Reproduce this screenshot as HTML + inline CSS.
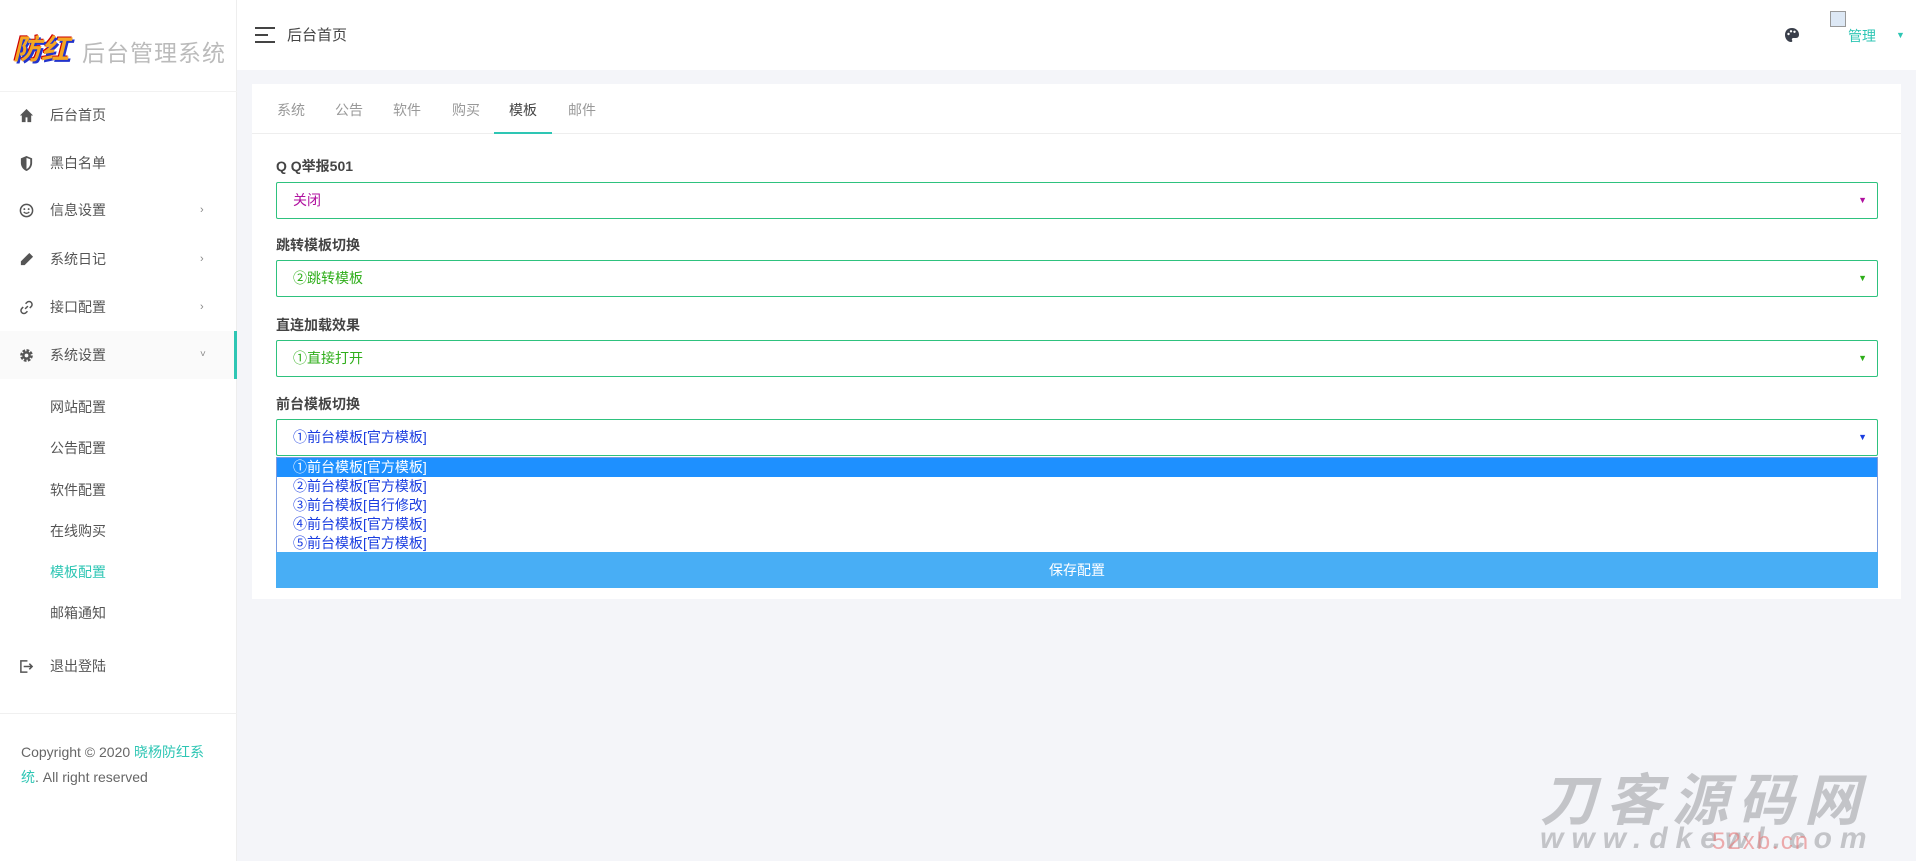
<!DOCTYPE html>
<html><head><meta charset="utf-8"><style>
*{box-sizing:border-box;margin:0;padding:0}
body{width:1916px;height:861px;background:#f4f5f9;font-family:"Liberation Sans","Noto Sans CJK SC",sans-serif;font-size:14px;color:#333;position:relative;overflow:hidden}
.a{position:absolute}
#side{left:0;top:0;width:237px;height:861px;background:#fff;border-right:1px solid #eee}
.mi{position:absolute;left:0;width:237px;height:48px;line-height:48px;color:#555;font-size:14px}
.mi .t{position:absolute;left:50px}
.mi .ic{position:absolute;left:19px;top:17px;width:15px;height:15px}
.mi .ar{position:absolute;left:200px;color:#888;font-size:11px}
.sub{position:absolute;left:50px;color:#555;font-size:14px}
#hdr{left:237px;top:0;width:1679px;height:70px;background:#fff}
#card{left:252px;top:84px;width:1649px;height:515px;background:#fff}
.tab{position:absolute;top:16px;font-size:14px;color:#999}
.lbl{position:absolute;left:24px;font-size:14px;font-weight:bold;color:#444}
.sel{position:absolute;left:24px;width:1602px;height:37px;border:1px solid #2ec27e;border-radius:2px;line-height:35px;padding-left:16px;font-size:14px}
.sel .tri{position:absolute;right:10px;top:0;font-size:9px}
.opt{height:19px;line-height:19px;padding-left:16px;color:#1a3de0;font-size:14px}
</style></head><body>
<div id="side" class="a">
  <div class="a" style="left:13px;top:28px;font-size:28px;font-weight:bold;color:#f5a623;font-style:italic;text-shadow:2px 2px 0 #2233cc,-1px -1px 0 #c00">防红</div>
  <div class="a" style="left:82px;top:34px;font-size:23px;color:#bbb;letter-spacing:1px">后台管理系统</div>
  <div class="a" style="left:0;top:91px;width:237px;height:1px;background:#f2f2f2"></div>
  <div class="mi" style="top:91px"><svg class="ic" viewBox="0 0 16 16"><path d="M8 1L1 8h2v7h4v-5h2v5h4V8h2z" fill="#555"/></svg><span class="t">后台首页</span></div>
  <div class="mi" style="top:139px"><svg class="ic" viewBox="0 0 16 16"><path d="M8 0L2 2.5v5C2 11.5 4.8 14.8 8 16c3.2-1.2 6-4.5 6-8.5v-5z" fill="#555"/><path d="M8 2v12c2.3-1 4-3.5 4-6.5V3.5z" fill="#fff"/></svg><span class="t">黑白名单</span></div>
  <div class="mi" style="top:186px"><svg class="ic" viewBox="0 0 16 16"><circle cx="8" cy="8" r="6.5" fill="none" stroke="#555" stroke-width="1.6"/><circle cx="5.7" cy="6.5" r="1" fill="#555"/><circle cx="10.3" cy="6.5" r="1" fill="#555"/><path d="M5 9.5q3 3 6 0" fill="none" stroke="#555" stroke-width="1.4"/></svg><span class="t">信息设置</span><span class="ar">›</span></div>
  <div class="mi" style="top:235px"><svg class="ic" viewBox="0 0 16 16"><path d="M11 1l4 4-9 9H2v-4z" fill="#555"/></svg><span class="t">系统日记</span><span class="ar">›</span></div>
  <div class="mi" style="top:283px"><svg class="ic" viewBox="0 0 16 16"><path d="M6.5 9.5l3-3M7 4l1.5-1.5a3 3 0 014.5 4.5L11.5 8.5M9 12l-1.5 1.5A3 3 0 013 9l1.5-1.5" fill="none" stroke="#555" stroke-width="1.6"/></svg><span class="t">接口配置</span><span class="ar">›</span></div>
  <div class="mi" style="top:331px;background:#fafafa;border-right:3px solid #2ec6b4"><svg class="ic" viewBox="0 0 16 16"><circle cx="8" cy="8" r="5" fill="none" stroke="#555" stroke-width="3.5" stroke-dasharray="2.6 1.3"/><circle cx="8" cy="8" r="4.5" fill="#555"/><circle cx="8" cy="8" r="2" fill="#fafafa"/></svg><span class="t">系统设置</span><span class="ar" style="font-size:10px">˅</span></div>
  <div class="sub" style="top:397px">网站配置</div>
  <div class="sub" style="top:438px">公告配置</div>
  <div class="sub" style="top:480px">软件配置</div>
  <div class="sub" style="top:521px">在线购买</div>
  <div class="sub" style="top:562px;color:#2ec6b4">模板配置</div>
  <div class="sub" style="top:603px">邮箱通知</div>
  <div class="mi" style="top:642px"><svg class="ic" viewBox="0 0 16 16"><path d="M9 2H2v12h7" fill="none" stroke="#555" stroke-width="1.6"/><path d="M5 8h9M11 5l3 3-3 3" fill="none" stroke="#555" stroke-width="1.6"/></svg><span class="t">退出登陆</span></div>
  <div class="a" style="left:0;top:713px;width:237px;height:1px;background:#f0f0f0"></div>
  <div class="a" style="left:21px;top:740px;width:190px;font-size:14px;line-height:25px;color:#666">Copyright © 2020 <span style="color:#2ec6b4">晓杨防红系统</span>. All right reserved</div>
</div>
<div id="hdr" class="a">
  <svg class="a" style="left:18px;top:27px" width="20" height="16" viewBox="0 0 20 16"><path d="M0 1h20M0 8h13M0 15h20" stroke="#444" stroke-width="2"/></svg>
  <div class="a" style="left:50px;top:24px;font-size:15px;color:#444">后台首页</div>
  <svg class="a" style="left:1547px;top:27px" width="16" height="16" viewBox="0 0 16 16"><path d="M8 1C3.5 1 1 4 1 8s3 7 6 7c1.5 0 1.5-1.2 1-2s0-2 1.5-2H12c2 0 3-1.5 3-3.5C15 4 12 1 8 1z" fill="#3a3f4b"/><circle cx="4.5" cy="7" r="1.2" fill="#fff"/><circle cx="7" cy="4.3" r="1.2" fill="#fff"/><circle cx="10.5" cy="4.8" r="1.2" fill="#fff"/></svg>
  <div class="a" style="left:1593px;top:11px;width:16px;height:16px;border:1px solid #999;background:#dde8f5"></div>
  <div class="a" style="left:1611px;top:26px;font-size:14px;color:#2ec6b4">管理</div>
  <div class="a" style="left:1659px;top:30px;font-size:9px;color:#2ec6b4">▼</div>
</div>
<div id="card" class="a">
  <div class="tab" style="left:25px">系统</div>
  <div class="tab" style="left:83px">公告</div>
  <div class="tab" style="left:141px">软件</div>
  <div class="tab" style="left:200px">购买</div>
  <div class="tab" style="left:257px;color:#444">模板</div>
  <div class="tab" style="left:316px">邮件</div>
  <div class="a" style="left:0;top:49px;width:1649px;height:1px;background:#eee"></div>
  <div class="a" style="left:242px;top:48px;width:58px;height:2px;background:#2ec6b4"></div>
  <div class="lbl" style="top:72px">Q Q举报501</div>
  <div class="sel" style="top:98px;color:#b0109f">关闭<span class="tri">▼</span></div>
  <div class="lbl" style="top:151px">跳转模板切换</div>
  <div class="sel" style="top:176px;color:#2fae1a">②跳转模板<span class="tri">▼</span></div>
  <div class="lbl" style="top:231px">直连加载效果</div>
  <div class="sel" style="top:256px;color:#2fae1a">①直接打开<span class="tri">▼</span></div>
  <div class="lbl" style="top:310px">前台模板切换</div>
  <div class="sel" style="top:335px;color:#1a3de0">①前台模板[官方模板]<span class="tri">▼</span></div>
  <div class="a" style="left:24px;top:373px;width:1602px;height:96px;border:1px solid #7a9be0;background:#fff">
    <div class="opt" style="background:#1e90ff;color:#fff">①前台模板[官方模板]</div>
    <div class="opt">②前台模板[官方模板]</div>
    <div class="opt">③前台模板[自行修改]</div>
    <div class="opt">④前台模板[官方模板]</div>
    <div class="opt">⑤前台模板[官方模板]</div>
  </div>
  <div class="a" style="left:24px;top:468px;width:1602px;height:36px;background:#48aef5;color:#fff;text-align:center;line-height:36px;font-size:14px">保存配置</div>
</div>
<div class="a" style="left:1540px;top:756px;font-size:56px;font-weight:bold;font-style:italic;color:#c3c4c8;letter-spacing:10px">刀客源码网</div>
<div class="a" style="left:1540px;top:822px;font-size:30px;font-weight:bold;font-style:italic;color:#c3c4c8;letter-spacing:8px">www.dkewl.com</div>
<div class="a" style="left:1712px;top:828px;font-size:24px;color:rgba(230,120,120,.6);letter-spacing:2px">52xb.cn</div>
</body></html>
